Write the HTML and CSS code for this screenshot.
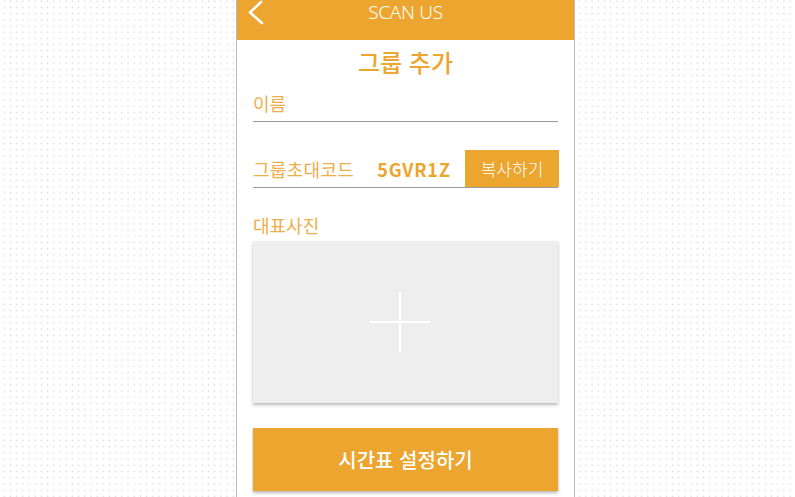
FILE: index.html
```html
<!DOCTYPE html>
<html lang="ko">
<head>
<meta charset="utf-8">
<link rel="stylesheet" href="styles.css">
</head>
<body>
<div class="phone">
  <header class="header">
    <span class="back">
      <svg width="18" height="26" viewBox="0 0 18 26"><polyline points="13,2 2,12.5 14,23" fill="none" stroke="#fff" stroke-width="2.6" stroke-linecap="round" stroke-linejoin="round"/></svg>
    </span>
    <span class="app-title">SCAN US</span>
    <span></span>
  </header>
  <main class="content">
    <h1 class="title">그룹 추가</h1>
    <div class="field">이름</div>
    <div class="code-row">
      <span class="code-label">그룹초대코드</span>
      <span class="code">5GVR1Z</span>
      <button class="copy">복사하기</button>
    </div>
    <div class="photo-label">대표사진</div>
    <div class="photo">
      <svg class="plus" width="60" height="60" viewBox="0 0 60 60"><path d="M30 0V60M0 30H60" stroke="#fff" stroke-width="2"/></svg>
    </div>
    <button class="primary">시간표 설정하기</button>
  </main>
</div>
</body>
</html>
```

FILE: styles.css
```css
html, body {
  margin: 0;
  padding: 0;
  height: 100%;
}
body {
  background-color: #ffffff;
  background-image: radial-gradient(circle, #d9d9d9 0.55px, rgba(255,255,255,0) 1.05px);
  background-size: 6.2px 6.2px;
  background-position: 1.2px -1.9px;
  font-family: "Noto Sans CJK KR", "Noto Sans", sans-serif;
  overflow: hidden;
}
.phone {
  margin-left: 236px;
  width: 337px;
  min-height: 497px;
  background: #fff;
  border-left: 1px solid #bdbaba;
  border-right: 1px solid #bdbaba;
}
.header {
  height: 40px;
  background: #eca52e;
  display: grid;
  grid-template-columns: 1fr auto 1fr;
  align-items: start;
}
.back {
  padding-left: 11px;
  height: 26px;
}
.back svg { display: block; }
.app-title {
  color: #fff;
  font-family: "Noto Sans", sans-serif;
  font-weight: 300;
  font-size: 19px;
  line-height: 24px;
  letter-spacing: -0.3px;
}
.content {
  padding: 0 16px;
  display: flex;
  flex-direction: column;
}
.title {
  margin: 6px 0 0;
  text-align: center;
  color: #eca52e;
  font-size: 24px;
  font-weight: 500;
  line-height: 32px;
}
.field {
  margin-top: 13px;
  color: #eeae4a;
  font-size: 18px;
  line-height: 24px;
  font-weight: 400;
  padding-bottom: 6px;
  border-bottom: 1px solid #9a9a9a;
}
.code-row {
  margin-top: 28px;
  display: flex;
  align-items: center;
  border-bottom: 1px solid #9a9a9a;
  height: 37px;
}
.code-label {
  color: #eeae4a;
  font-size: 18px;
  line-height: 24px;
  letter-spacing: 0.3px;
}
.code {
  margin-left: 23px;
  color: #eca52e;
  font-family: "Noto Sans CJK KR", sans-serif;
  font-weight: 700;
  font-size: 18px;
  line-height: 24px;
  letter-spacing: 0.9px;
}
.copy {
  margin-left: auto;
  width: 94px;
  height: 37px;
  border: none;
  background: #eca52e;
  color: #fff;
  font-family: "Noto Sans CJK KR", sans-serif;
  font-size: 17px;
  font-weight: 300;
  padding: 0;
  margin-right: -1px;
}
.photo-label {
  margin-top: 25px;
  color: #eeae4a;
  font-size: 18px;
  line-height: 24px;
}
.photo {
  margin-top: 4px;
  height: 162px;
  background: #eeeeee;
  box-shadow: 0 2px 3px rgba(0,0,0,0.28);
  display: flex;
  align-items: center;
  justify-content: center;
}
.plus {
  display: block;
  margin-right: 11px;
}
.primary {
  margin-top: 25px;
  height: 63px;
  border: none;
  background: #eca52e;
  color: #fff;
  font-family: "Noto Sans CJK KR", sans-serif;
  font-size: 20px;
  font-weight: 500;
  box-shadow: 0 2px 3px rgba(0,0,0,0.28);
  padding: 0;
}
```
